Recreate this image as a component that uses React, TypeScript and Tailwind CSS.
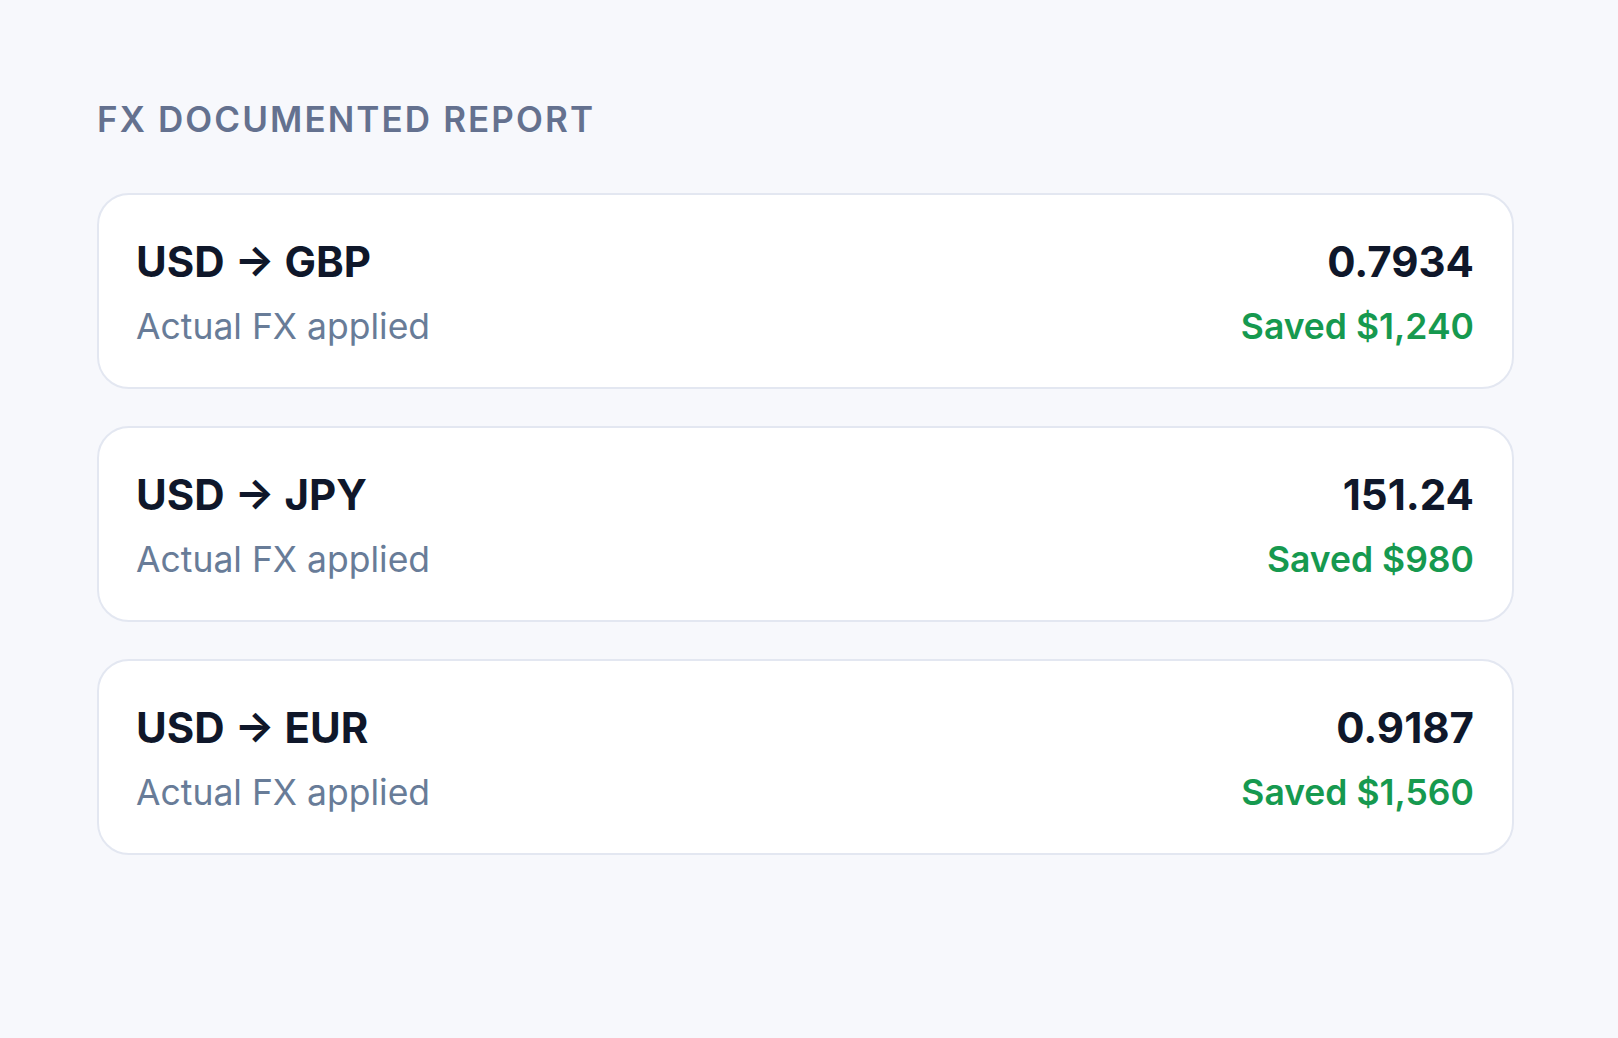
const rows = [
  { pair: "USD → GBP", rate: "0.7934", saved: "Saved $1,240" },
  { pair: "USD → JPY", rate: "151.24", saved: "Saved $980" },
  { pair: "USD → EUR", rate: "0.9187", saved: "Saved $1,560" },
];

export default function App() {
  return (
    <div className="min-h-[1038px] w-full bg-[#f7f8fc] pl-[97px] pr-[104px] pt-[92px] font-['Inter',sans-serif]">
      <h2 className="text-[35px] font-semibold uppercase leading-[54px] tracking-[0.06em] text-[#64718f]">
        FX Documented Report
      </h2>
      <div className="mt-[47px] flex flex-col gap-[37px]">
        {rows.map((r) => (
          <div
            key={r.pair}
            className="flex items-center justify-between rounded-[32px] border-2 border-[#e3e7f1] bg-white pl-[37px] pr-[38px] pt-[42px] pb-[38px]"
          >
            <div className="flex flex-col gap-[18px]">
              <p className="text-[42px] font-bold leading-[50px] text-[#0f172a]">{r.pair}</p>
              <p className="text-[35.5px] font-normal leading-[44px] text-[#687c98]">Actual FX applied</p>
            </div>
            <div className="flex flex-col items-end gap-[18px]">
              <p className="text-[42px] font-bold leading-[50px] text-[#0f172a]">{r.rate}</p>
              <p className="text-[35.5px] font-semibold leading-[44px] text-[#16994f]">{r.saved}</p>
            </div>
          </div>
        ))}
      </div>
    </div>
  );
}
